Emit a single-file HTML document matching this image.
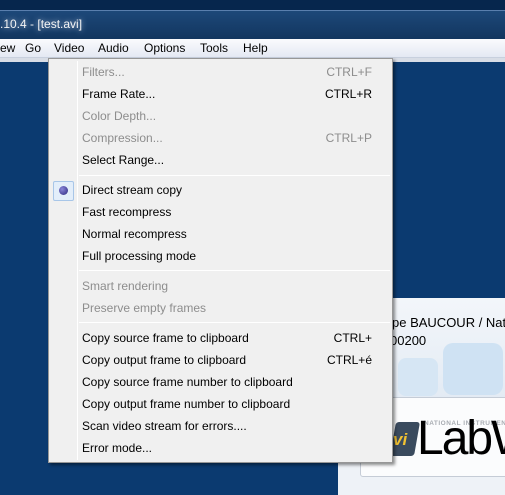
<!DOCTYPE html>
<html><head><meta charset="utf-8"><style>
*{margin:0;padding:0;box-sizing:border-box}
body{width:505px;height:495px;overflow:hidden;background:#0b3a70;font-family:"Liberation Sans",sans-serif;font-size:12px;position:relative}
.top{position:absolute;left:0;top:0;width:505px;height:10px;background:#06264d}
.title{position:absolute;left:0;top:10px;width:505px;height:29px;background:linear-gradient(#1d4879,#12365f);border-top:1px solid #5a7fae;color:#fff}
.title span{position:absolute;left:0;top:6px;font-size:12px;color:#f4f4f4;text-shadow:0 0 6px #b8c8e0}
.mb{position:absolute;left:0;top:39px;width:505px;height:19px;background:linear-gradient(#fafbfd,#e4e9f3);border-bottom:1px solid #c8d0de}
.mb span{position:absolute;top:2px;color:#000;font-size:12px}
.strip{position:absolute;left:0;top:58px;width:505px;height:4px;background:#d8dde6}
.vid{position:absolute;left:49px;top:40px;width:41px;height:18px;border:1px solid #6b7585;border-radius:3px;background:linear-gradient(#e8ecf2,#d0d6e0)}
.panel{position:absolute;left:338px;top:298px;width:167px;height:197px;background:#eef2f7;overflow:hidden}
.menu{position:absolute;left:48px;top:58px;width:345px;height:405px;background:#f0f0f0;border:1px solid #979797;box-shadow:2px 2px 3px rgba(0,0,0,.45)}
.gut{position:absolute;left:28px;top:2px;bottom:2px;width:1px;background:#e2e3e3;border-right:1px solid #fff}
.it{position:absolute;left:33px;height:22px;line-height:22px;width:290px;color:#000}
.it b{font-weight:normal;position:absolute;right:0;top:0}
.d{color:#8d8d8d}
.sep{position:absolute;left:30px;right:2px;height:1px;background:#d7d7d7;border-bottom:1px solid #fff}
</style></head><body>
<div class="top"></div>
<div class="title"><span>.10.4 - [test.avi]</span></div>
<div class="mb">
<div class="vid"></div>
<span style="left:0">ew</span><span style="left:25px">Go</span><span style="left:54px">Video</span><span style="left:98px">Audio</span><span style="left:144px">Options</span><span style="left:200px">Tools</span><span style="left:243px">Help</span>
</div>
<div class="strip"></div>
<div class="panel">
<div style="position:absolute;left:0;top:0;width:167px;height:100px;background:linear-gradient(#f3f6fa,#e3ebf4)"></div>
<div style="position:absolute;left:60px;top:60px;width:40px;height:38px;background:#d6e6f4;border-radius:8px"></div>
<div style="position:absolute;left:105px;top:45px;width:60px;height:52px;background:#cfe2f3;border-radius:10px"></div>
<div style="position:absolute;left:54px;top:17px;color:#000;font-size:13px;white-space:nowrap">pe BAUCOUR / Natio</div>
<div style="position:absolute;left:52px;top:35px;color:#000;font-size:13px">00200</div>
<div style="position:absolute;left:22px;top:99px;width:170px;height:80px;background:#fbfcfd;border:1px solid #c5ccd6;border-radius:3px"></div>
<div style="position:absolute;left:86px;top:122px;font-size:6.5px;font-weight:bold;color:#a8acb2;letter-spacing:.5px;white-space:nowrap">NATIONAL INSTRUMENTS</div>
<div style="position:absolute;left:79px;top:117px;font-size:48px;color:#000;letter-spacing:-2px;white-space:nowrap;line-height:1">LabW</div>
<div style="position:absolute;left:55px;top:124px;width:24px;height:34px;background:#3a4b5e;transform:skewX(-10deg);border-radius:3px"></div>
<div style="position:absolute;left:55px;top:132px;font-size:17px;font-weight:bold;color:#f1c232;font-style:italic">vi</div>
</div>
<div class="menu">
<div class="gut"></div>
<div class="it d" style="top:2px">Filters...<b>CTRL+F</b></div>
<div class="it" style="top:24px">Frame Rate...<b>CTRL+R</b></div>
<div class="it d" style="top:46px">Color Depth...</div>
<div class="it d" style="top:68px">Compression...<b>CTRL+P</b></div>
<div class="it" style="top:90px">Select Range...</div>
<div class="sep" style="top:116px"></div>
<div style="position:absolute;left:4px;top:122px;width:21px;height:20px;border:1px solid #a8c6e8;border-radius:2px;background:#e3eefa"></div>
<div style="position:absolute;left:10px;top:127px;width:9px;height:9px;border-radius:50%;background:radial-gradient(circle at 35% 35%,#8a86d8,#2c2880)"></div>
<div class="it" style="top:120px">Direct stream copy</div>
<div class="it" style="top:142px">Fast recompress</div>
<div class="it" style="top:164px">Normal recompress</div>
<div class="it" style="top:186px">Full processing mode</div>
<div class="sep" style="top:211px"></div>
<div class="it d" style="top:216px">Smart rendering</div>
<div class="it d" style="top:238px">Preserve empty frames</div>
<div class="sep" style="top:263px"></div>
<div class="it" style="top:268px">Copy source frame to clipboard<b>CTRL+</b></div>
<div class="it" style="top:290px">Copy output frame to clipboard<b>CTRL+é</b></div>
<div class="it" style="top:312px">Copy source frame number to clipboard</div>
<div class="it" style="top:334px">Copy output frame number to clipboard</div>
<div class="it" style="top:356px">Scan video stream for errors....</div>
<div class="it" style="top:378px">Error mode...</div>
</div>
</body></html>
